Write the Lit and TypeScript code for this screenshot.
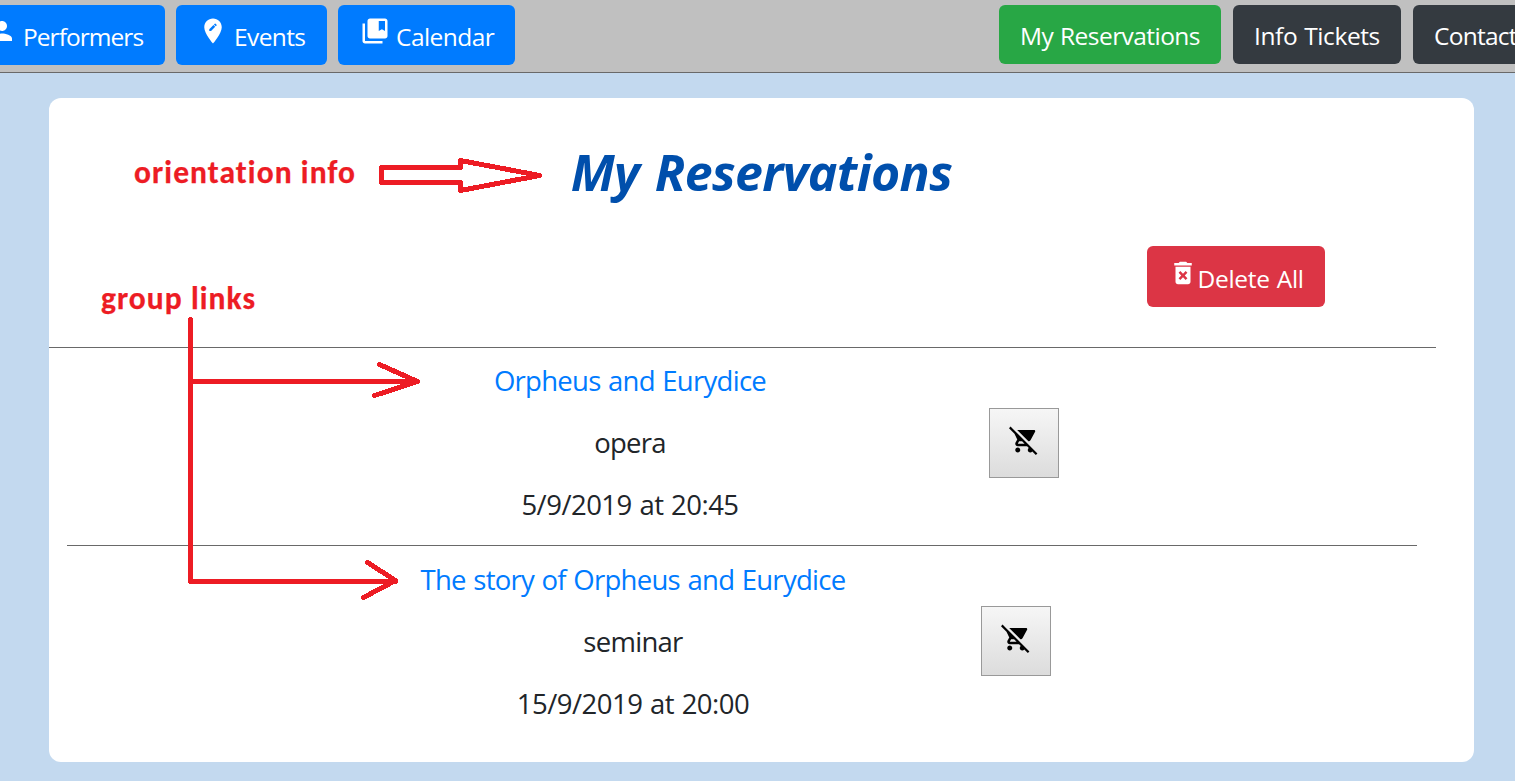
import { LitElement, html, css, svg } from "lit";
import { customElement } from "lit/decorators.js";

const ICONS = {
  person: "M12 12c2.21 0 4-1.79 4-4s-1.79-4-4-4-4 1.79-4 4 1.79 4 4 4zm0 2c-2.67 0-8 1.34-8 4v2h16v-2c0-2.66-5.33-4-8-4z",
  place: "M12 2C8.14 2 5 5.14 5 9c0 5.25 7 13 7 13s7-7.75 7-13c0-3.86-3.14-7-7-7zm-1.56 10H9v-1.44l3.35-3.34 1.43 1.43L10.44 12zm4.45-4.45l-.7.7-1.44-1.44.7-.7c.15-.15.39-.15.54 0l.9.9c.15.15.15.39 0 .54z",
  bookmark: "M4 6H2v14c0 1.1.9 2 2 2h14v-2H4V6zM20 2H8c-1.1 0-2 .9-2 2v12c0 1.1.9 2 2 2h12c1.1 0 2-.9 2-2V4c0-1.1-.9-2-2-2zm0 10l-2.5-1.5L15 12V4h5v8z",
  trash: "M6 19c0 1.1.9 2 2 2h8c1.1 0 2-.9 2-2V7H6v12zm2.46-7.12l1.41-1.41L12 12.59l2.12-2.12 1.41 1.41L13.41 14l2.12 2.12-1.41 1.41L12 15.41l-2.12 2.12-1.41-1.41L10.59 14l-2.13-2.12zM15.5 4l-1-1h-5l-1 1H5v2h14V4z",
  cartOff: "M22.73 22.73L2.77 2.77 2 2l-.73-.73L0 2.54l4.39 4.39 2.21 4.66-1.35 2.45c-.16.28-.25.61-.25.96 0 1.1.9 2 2 2h7.46l1.38 1.38c-.5.36-.83.95-.83 1.62 0 1.1.89 2 1.99 2 .67 0 1.26-.33 1.62-.84L21.46 24l1.27-1.27zM7.42 15c-.14 0-.25-.11-.25-.25l.03-.12.9-1.63h2.36l2 2H7.42zm8.13-2c.75 0 1.41-.41 1.75-1.03l3.58-6.49c.08-.14.12-.31.12-.48 0-.55-.45-1-1-1H6.54l9.01 9zM7 18c-1.1 0-1.99.9-1.99 2S5.9 22 7 22s2-.9 2-2-.9-2-2-2z",
};

const icon = (name: keyof typeof ICONS) =>
  html`<svg class="icon" viewBox="0 0 24 24">${svg`<path d=${ICONS[name]}></path>`}</svg>`;

@customElement("app-root")
export class AppRoot extends LitElement {
  static styles = css`
    :host {
      display: block;
      position: relative;
      width: 100%;
      height: 781px;
      overflow: hidden;
      background: #c3d9ef;
      font-family: "Open Sans", "Noto Sans", sans-serif;
      color: #212529;
    }
    * { box-sizing: border-box; }
    .bar {
      display: flex;
      justify-content: space-between;
      height: 73px;
      padding-top: 5px;
      background: #c0c0c0;
      border-bottom: 1px solid #696969;
    }
    .group { display: flex; gap: 11px; margin-left: -35px; }
    .group.right { gap: 12px; margin: 0 -20px 0 0; }
    .btn {
      display: flex;
      height: 60px;
      padding: 0 0 0 22px;
      border: 0;
      border-radius: 6px;
      color: #fff;
      font: 24.5px/34px "Open Sans", "Noto Sans", sans-serif;
      white-space: nowrap;
      flex: none;
    }
    .btn .icon { margin-top: 10.5px; }
    .btn span { margin-top: 15px; }
    .right .btn { height: 59px; padding-left: 21px; }
    .right .btn span { margin-top: 14px; }
    .icon { width: 30px; height: 30px; fill: currentColor; flex: none; display: block; }
    .primary { background: #007bff; }
    .success { background: #28a745; }
    .dark { background: #343a40; }
    .danger { background: #dc3545; }
    .performers { width: 200px; }
    .performers span { margin-left: 6px; letter-spacing: -0.95px; }
    .events { width: 151px; }
    .events span { margin-left: 6px; letter-spacing: -0.6px; }
    .calendar { width: 177px; }
    .calendar span { margin-left: 6px; letter-spacing: -0.55px; }
    .mine { width: 222px; }
    .mine span { letter-spacing: -0.55px; word-spacing: 1px; }
    .info { width: 168px; }
    .info span { letter-spacing: -0.4px; word-spacing: 1px; }
    .contact { width: 122px; }
    .contact span { letter-spacing: -0.75px; }

    .card {
      width: 1425px;
      height: 664px;
      margin: 25px 0 0 49px;
      border-radius: 12px;
      background: #fff;
    }
    h1 {
      margin: 0;
      padding-top: 39px;
      height: 148px;
      text-align: center;
      font: italic 700 50px/70px "Open Sans", "Noto Sans", sans-serif;
      color: #004fac;
      letter-spacing: -0.6px;
      word-spacing: 3px;
    }
    .actions {
      display: flex;
      justify-content: flex-end;
      height: 101px;
      padding-right: 149px;
    }
    .delete { width: 178px; height: 61px; padding-left: 20.5px; }
    .delete .icon { margin-top: 12px; }
    .delete span { margin-top: 16px; letter-spacing: -0.3px; word-spacing: 1px; }
    .row {
      display: flex;
      border-top: 1px solid #696969;
    }
    .first { width: 1387px; height: 198px; padding: 12px 0 0 222px; }
    .second { width: 1350px; height: 198px; margin-left: 18px; padding: 13px 0 0 218px; }
    .details {
      display: flex;
      flex-direction: column;
      gap: 20px;
      align-items: center;
      font-size: 27.5px;
      line-height: 42px;
      letter-spacing: -0.72px;
      word-spacing: 1px;
      white-space: nowrap;
    }
    .details a { color: #007bff; text-decoration: none; }
    .first .details { width: 718px; }
    .second .details { width: 696px; }
    .details .date { letter-spacing: -0.52px; }
    .remove {
      display: flex;
      align-items: flex-start;
      justify-content: center;
      width: 70px;
      height: 70px;
      margin-top: 48px;
      padding: 16px 0 0;
      border: 1px solid #999;
      background: linear-gradient(#f6f6f6, #dcdcdc);
      color: #000;
    }
    .second .remove { margin-top: 47px; }
    .notes {
      position: absolute;
      inset: 0;
      width: 1515px;
      height: 781px;
      pointer-events: none;
    }
    .strokes {
      fill: none;
      stroke: #ed1c24;
      stroke-width: 5;
      stroke-linecap: round;
      stroke-linejoin: round;
      shape-rendering: crispEdges;
    }
    .label {
      font: 700 31.5px "Carlito", "Lato", sans-serif;
      font-variant-ligatures: none;
      fill: #ed1c24;
      stroke: #ed1c24;
      stroke-width: 0.25;
    }
  `;

  render() {
    return html`
      <nav class="bar">
        <div class="group">
          <button class="btn primary performers">${icon("person")}<span>Performers</span></button>
          <button class="btn primary events">${icon("place")}<span>Events</span></button>
          <button class="btn primary calendar">${icon("bookmark")}<span>Calendar</span></button>
        </div>
        <div class="group right">
          <button class="btn success mine"><span>My Reservations</span></button>
          <button class="btn dark info"><span>Info Tickets</span></button>
          <button class="btn dark contact"><span>Contact</span></button>
        </div>
      </nav>
      <main class="card">
        <h1>My Reservations</h1>
        <div class="actions">
          <button class="btn danger delete">${icon("trash")}<span>Delete All</span></button>
        </div>
        <section class="row first">
          <div class="details">
            <a>Orpheus and Eurydice</a>
            <span>opera</span>
            <span class="date">5/9/2019 at 20:45</span>
          </div>
          <button class="remove">${icon("cartOff")}</button>
        </section>
        <section class="row second">
          <div class="details">
            <a>The story of Orpheus and Eurydice</a>
            <span>seminar</span>
            <span class="date">15/9/2019 at 20:00</span>
          </div>
          <button class="remove">${icon("cartOff")}</button>
        </section>
      </main>
      <svg class="notes" viewBox="0 0 1515 781">
        <g class="strokes">
          <path d="M381.5 167.5H460.500V160.500L539.500 175.500L460.500 190.500V182.500H381.500Z"></path>
          <path d="M190.500 319.500V581.500H395.500M190.500 381.500H417.500"></path>
          <path d="M379.500 364.500L417.500 381.500L374.500 395.500"></path>
          <path d="M367.500 562.500L395.500 580.500L363.500 597.500"></path>
        </g>
        <text class="label" x="134" y="183" textLength="221">orientation info</text>
        <text class="label" x="101" y="309" textLength="154">group links</text>
      </svg>
    `;
  }
}
